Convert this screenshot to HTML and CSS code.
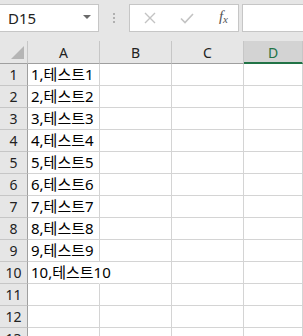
FILE: index.html
```html
<!DOCTYPE html>
<html>
<head>
  <link rel="stylesheet" href="styles.css">
</head>
<body>
  <div class="formula-bar">
    <div class="name-box">
      <span class="name-text">D15</span>
      <svg class="name-arrow" width="8" height="4" viewBox="0 0 8 4"><path d="M0 0 L8 0 L4 4 Z" fill="#6a6a6a"/></svg>
    </div>
    <div class="grip"><i></i><i></i><i></i></div>
    <div class="fx-buttons">
      <svg width="12" height="12" viewBox="0 0 12 12"><path d="M1 1 L11 11 M11 1 L1 11" stroke="#c3c3c3" stroke-width="1.4"/></svg>
      <svg width="14" height="11" viewBox="0 0 14 11"><path d="M1 5.5 L5 9.5 L13 1" stroke="#c3c3c3" stroke-width="1.6" fill="none"/></svg>
      <span class="fx">f<sub>x</sub></span>
    </div>
    <div class="formula-input"></div>
  </div>

  <div class="sheet">
    <div class="corner"><svg width="13" height="13" viewBox="0 0 13 13"><path d="M13 0 L13 13 L0 13 Z" fill="#b5b5b5"/></svg></div>
    <div class="col-head">A</div>
    <div class="col-head">B</div>
    <div class="col-head">C</div>
    <div class="col-head selected">D</div>

    <div class="row-head">1</div><div class="cell">1,테스트1</div><div class="cell"></div><div class="cell"></div><div class="cell"></div>
    <div class="row-head">2</div><div class="cell">2,테스트2</div><div class="cell"></div><div class="cell"></div><div class="cell"></div>
    <div class="row-head">3</div><div class="cell">3,테스트3</div><div class="cell"></div><div class="cell"></div><div class="cell"></div>
    <div class="row-head">4</div><div class="cell">4,테스트4</div><div class="cell"></div><div class="cell"></div><div class="cell"></div>
    <div class="row-head">5</div><div class="cell">5,테스트5</div><div class="cell"></div><div class="cell"></div><div class="cell"></div>
    <div class="row-head">6</div><div class="cell">6,테스트6</div><div class="cell"></div><div class="cell"></div><div class="cell"></div>
    <div class="row-head">7</div><div class="cell">7,테스트7</div><div class="cell"></div><div class="cell"></div><div class="cell"></div>
    <div class="row-head">8</div><div class="cell">8,테스트8</div><div class="cell"></div><div class="cell"></div><div class="cell"></div>
    <div class="row-head">9</div><div class="cell">9,테스트9</div><div class="cell"></div><div class="cell"></div><div class="cell"></div>
    <div class="row-head">10</div><div class="cell overflow">10,테스트10</div><div class="cell"></div><div class="cell"></div><div class="cell"></div>
    <div class="row-head">11</div><div class="cell"></div><div class="cell"></div><div class="cell"></div><div class="cell"></div>
    <div class="row-head">12</div><div class="cell"></div><div class="cell"></div><div class="cell"></div><div class="cell"></div>
    <div class="row-head">13</div><div class="cell"></div><div class="cell"></div><div class="cell"></div><div class="cell"></div>
  </div>
</body>
</html>
```

FILE: styles.css
```css
body {
  margin: 0;
  width: 303px;
  height: 336px;
  overflow: hidden;
  background: #e6e6e6;
  font-family: "Noto Sans", "Noto Sans CJK KR", sans-serif;
}

.formula-bar {
  display: flex;
  align-items: stretch;
  height: 28px;
  padding: 4px 0 9px 0;
}

.name-box {
  box-sizing: border-box;
  width: 101px;
  margin-left: -2px;
  background: #fff;
  border: 1px solid #c6c6c6;
  display: flex;
  align-items: center;
  justify-content: space-between;
  padding: 0 7px 0 9px;
}

.name-text {
  font-size: 15px;
  color: #222;
}

.name-arrow {
  margin-top: -2px;
}

.grip {
  width: 30px;
  display: flex;
  flex-direction: column;
  align-items: center;
  justify-content: center;
  gap: 2px;
}

.grip i {
  display: block;
  width: 2px;
  height: 2px;
  background: #b0b0b0;
}

.fx-buttons {
  box-sizing: border-box;
  width: 110px;
  background: #fff;
  border: 1px solid #c6c6c6;
  display: flex;
  align-items: center;
  padding: 0 10px 0 14px;
  justify-content: space-between;
}

.fx {
  font-family: "Liberation Serif", serif;
  font-style: italic;
  font-size: 15px;
  color: #555;
  margin-top: -4px;
}

.fx sub {
  font-size: 11px;
  vertical-align: -2px;
}

.formula-input {
  flex: 1;
  margin-left: 3px;
  background: #fff;
  border: 1px solid #c6c6c6;
  border-right: none;
}

.sheet {
  display: grid;
  grid-template-columns: 28px 72px 72px 72px 1fr;
  grid-auto-rows: 22px;
  grid-template-rows: 23px;
  background: #fff;
}

.corner {
  box-sizing: border-box;
  background: #e6e6e6;
  border-right: 1px solid #c6c6c6;
  border-bottom: 1px solid #9f9f9f;
  display: flex;
  align-items: flex-end;
  justify-content: flex-end;
  padding: 0 3px 4px 0;
}

.col-head {
  box-sizing: border-box;
  background: #e6e6e6;
  border-right: 1px solid #c6c6c6;
  border-bottom: 1px solid #9f9f9f;
  font-size: 14px;
  color: #222;
  display: flex;
  align-items: center;
  justify-content: center;
  padding-top: 1px;
}

.col-head.selected {
  background: #d3d3d3;
  color: #217346;
  border-bottom: 2px solid #217346;
}

.row-head {
  box-sizing: border-box;
  background: #e6e6e6;
  border-right: 1px solid #9f9f9f;
  border-bottom: 1px solid #c6c6c6;
  font-size: 14px;
  color: #222;
  display: flex;
  align-items: center;
  justify-content: center;
}

.cell {
  box-sizing: border-box;
  border-right: 1px solid #d4d4d4;
  border-bottom: 1px solid #d4d4d4;
  font-size: 15px;
  color: #000;
  padding-left: 3px;
  white-space: nowrap;
  line-height: 21px;
}

.cell.overflow {
  overflow: visible;
  border-right-color: #fff;
  position: relative;
  z-index: 1;
}
```
